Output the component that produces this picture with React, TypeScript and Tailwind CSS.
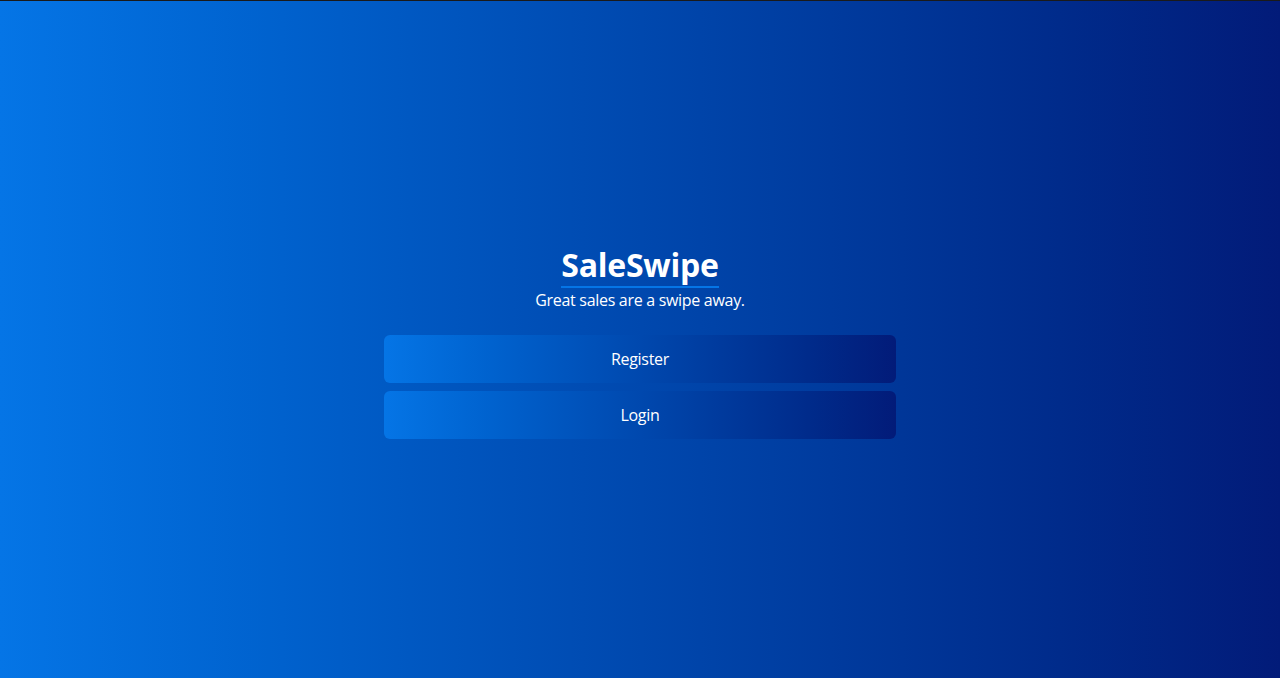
import React from "react";

export default function App() {
  return (
    <div
      className="h-[678px] w-full flex flex-col bg-gradient-to-r from-[#0575E6] to-[#021B79] border-t border-[#1a1a1a]"
      style={{ fontFamily: '"Open Sans", sans-serif' }}
    >
      <div className="flex-1 flex flex-col items-center justify-center pt-[4px]">
        <h1 className="text-[32px] leading-[42px] font-bold text-white border-b-2 border-[#0575E6] tracking-[-0.25px]">
          SaleSwipe
        </h1>
        <p className="text-white text-[16px] leading-[24px] tracking-[-0.3px]">Great sales are a swipe away.</p>
        <div className="w-[512px] mt-[23px] flex flex-col gap-2">
          <button className="h-12 w-full rounded-md bg-gradient-to-r from-[#0575E6] to-[#021B79] text-white text-[16px] tracking-[-0.3px]">
            Register
          </button>
          <button className="h-12 w-full rounded-md bg-gradient-to-r from-[#0575E6] to-[#021B79] text-white text-[16px] tracking-[-0.3px]">
            Login
          </button>
        </div>
      </div>
    </div>
  );
}
